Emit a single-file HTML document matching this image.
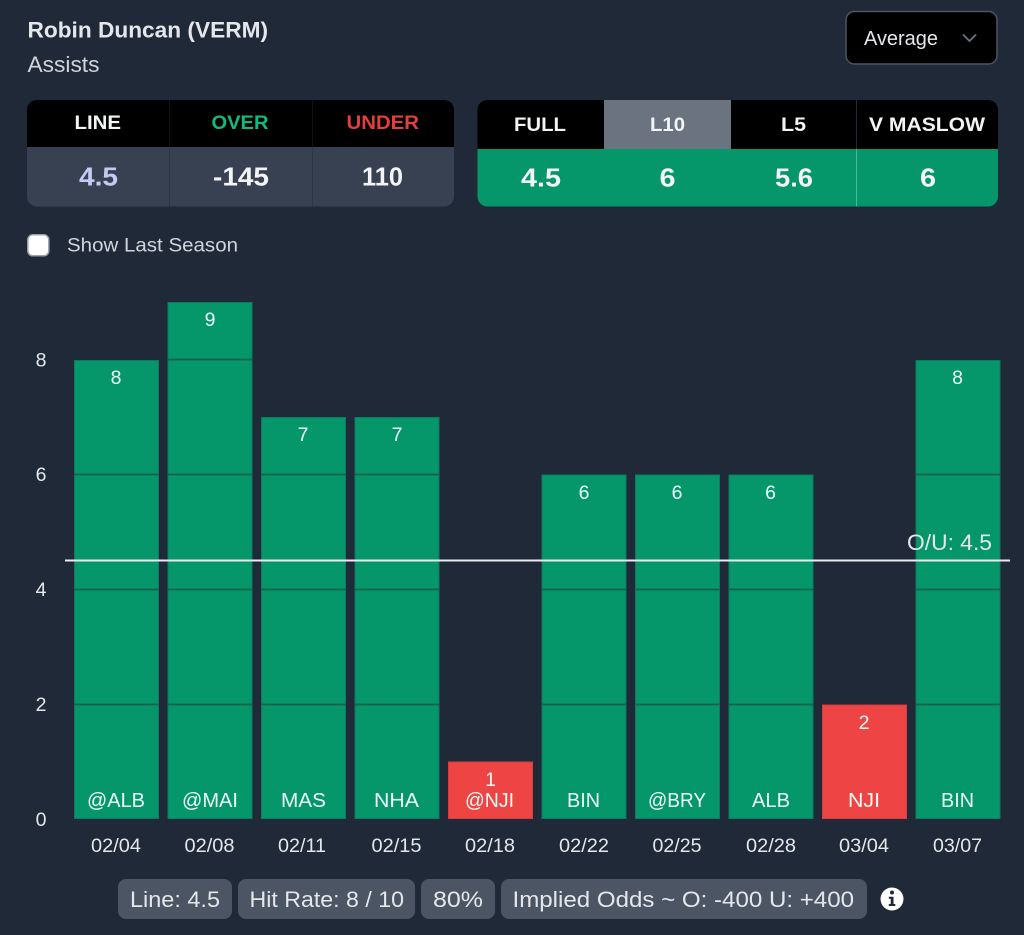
<!DOCTYPE html>
<html><head><meta charset="utf-8"><style>
html,body{margin:0;padding:0;background:#1f2937;width:1024px;height:935px;overflow:hidden}
svg{display:block;font-family:"Liberation Sans",sans-serif}
.b{font-weight:700}
.bar{fill:#059669;stroke:#0a7c62;stroke-width:1}
.red{fill:#ef4444;stroke:#d23f45;stroke-width:1}
.v{font-size:19.5px;fill:#ecfdf5;text-anchor:middle}
.a{font-size:19.5px;fill:#e5e7eb;text-anchor:middle}
.c{font-size:22px;fill:#e5e7eb}
.g{stroke:#14604f;stroke-width:1.8}
.h{font-size:19.5px;font-weight:700;fill:#f3f4f6}
.n{font-size:26px;font-weight:700;fill:#f3f4f6}
</style></head><body>
<svg width="1024" height="935" viewBox="0 0 1024 935" xmlns="http://www.w3.org/2000/svg">
<rect width="1024" height="935" fill="#1f2937"/>
<text x="27.5" y="37.500" class="b" font-size="22.5" fill="#e5e7eb" lengthAdjust="spacingAndGlyphs" textLength="240.5">Robin Duncan (VERM)</text>
<text x="27.5" y="72" font-size="22" fill="#d1d5db" lengthAdjust="spacingAndGlyphs" textLength="72">Assists</text>

<rect x="846" y="11.5" width="151" height="52.5" rx="8.5" fill="#000" stroke="#4b5563" stroke-width="1.5"/>
<text x="864" y="45" font-size="20" fill="#e5e7eb" lengthAdjust="spacingAndGlyphs" textLength="74">Average</text>
<path d="M963 34.5 L969.5 41 L976 34.5" fill="none" stroke="#6b7280" stroke-width="1.8"/>

<!-- left table -->
<clipPath id="l"><rect x="27" y="100" width="427" height="106.5" rx="10"/></clipPath>
<g clip-path="url(#l)">
<rect x="27" y="100" width="427" height="47" fill="#000"/>
<rect x="27" y="147" width="427" height="60" fill="#374151"/>
<path d="M169.5 100V207M312.5 100V207" stroke="#1f2937" stroke-width="1" opacity=".45"/>
</g>
<text x="74.5" y="129" class="h" lengthAdjust="spacingAndGlyphs" textLength="46.5">LINE</text>
<text x="211.5" y="129" class="h" style="fill:#10b981" lengthAdjust="spacingAndGlyphs" textLength="57">OVER</text>
<text x="346.5" y="129" class="h" style="fill:#e53e3e" lengthAdjust="spacingAndGlyphs" textLength="72.5">UNDER</text>
<text x="79" y="185.500" class="n" style="fill:#c3cbf5" lengthAdjust="spacingAndGlyphs" textLength="39">4.5</text>
<text x="213" y="185.500" class="n" lengthAdjust="spacingAndGlyphs" textLength="56">-145</text>
<text x="362" y="185.500" class="n" lengthAdjust="spacingAndGlyphs" textLength="41">110</text>

<!-- right table -->
<clipPath id="r"><rect x="477.500" y="100" width="520.500" height="106.500" rx="10"/></clipPath>
<g clip-path="url(#r)">
<rect x="477" y="100" width="522" height="49" fill="#000"/>
<rect x="604" y="100" width="127" height="49" fill="#6b7280"/>
<rect x="477" y="149" width="522" height="58" fill="#059669"/>
<path d="M856.500 100V149" stroke="#1f2937" stroke-width="1"/>
<path d="M856.500 149V207" stroke="#4fb596" stroke-width="1"/>
</g>
<text x="514" y="131" class="h" lengthAdjust="spacingAndGlyphs" textLength="52">FULL</text>
<text x="650" y="131" class="h" lengthAdjust="spacingAndGlyphs" textLength="35">L10</text>
<text x="781" y="131" class="h" lengthAdjust="spacingAndGlyphs" textLength="25">L5</text>
<text x="869" y="131" class="h" lengthAdjust="spacingAndGlyphs" textLength="116">V MASLOW</text>
<text x="521" y="186.500" class="n" lengthAdjust="spacingAndGlyphs" textLength="40">4.5</text>
<text x="659.500" y="186.500" class="n" lengthAdjust="spacingAndGlyphs" textLength="16">6</text>
<text x="775" y="186.500" class="n" lengthAdjust="spacingAndGlyphs" textLength="38">5.6</text>
<text x="920" y="186.500" class="n" lengthAdjust="spacingAndGlyphs" textLength="16">6</text>

<!-- checkbox -->
<rect x="27.800" y="234.800" width="21" height="21" rx="5" fill="#fff" stroke="#9ca3af" stroke-width="1.500"/>
<text x="67" y="251.500" font-size="19.500" fill="#d1d5db" lengthAdjust="spacingAndGlyphs" textLength="171">Show Last Season</text>

<!-- axis -->
<text x="41" y="366.500" class="a">8</text>
<text x="41" y="481" class="a">6</text>
<text x="41" y="596" class="a">4</text>
<text x="41" y="711" class="a">2</text>
<text x="41" y="826" class="a">0</text>

<!-- bars -->
<rect class="bar" x="74.500" y="360.500" width="84" height="458"/>
<rect class="bar" x="168" y="302.500" width="84" height="516"/>
<rect class="bar" x="261.500" y="417.500" width="84" height="401"/>
<rect class="bar" x="355" y="417.500" width="84" height="401"/>
<rect class="red" x="448.500" y="762" width="84" height="56.500"/>
<rect class="bar" x="542" y="475" width="84" height="343.500"/>
<rect class="bar" x="635.500" y="475" width="84" height="343.500"/>
<rect class="bar" x="729" y="475" width="84" height="343.500"/>
<rect class="red" x="822.500" y="705" width="84" height="113.500"/>
<rect class="bar" x="916" y="360.500" width="84" height="458"/>

<!-- grid lines inside bars -->
<path class="g" d="M168 359.500H252M74.500 474.500H158.500M168 474.500H252M261.500 474.500H345.500M355 474.500H439M916 474.500H1000M74.500 589.500H158.500M168 589.500H252M261.500 589.500H345.500M355 589.500H439M542 589.500H626M635.500 589.500H719.500M729 589.500H813M916 589.500H1000M74.500 704.500H158.500M168 704.500H252M261.500 704.500H345.500M355 704.500H439M542 704.500H626M635.500 704.500H719.500M729 704.500H813M916 704.500H1000"/>

<!-- top values -->
<text x="116" y="384" class="v">8</text>
<text x="210" y="326" class="v">9</text>
<text x="303" y="441" class="v">7</text>
<text x="397" y="441" class="v">7</text>
<text x="490.500" y="786" class="v">1</text>
<text x="584" y="499" class="v">6</text>
<text x="677" y="499" class="v">6</text>
<text x="770.500" y="499" class="v">6</text>
<text x="864" y="729" class="v">2</text>
<text x="957.500" y="384" class="v">8</text>

<!-- opponent -->
<g font-size="20" fill="#ecfdf5">
<text x="87" y="807" lengthAdjust="spacingAndGlyphs" textLength="58">@ALB</text>
<text x="182" y="807" lengthAdjust="spacingAndGlyphs" textLength="56">@MAI</text>
<text x="281" y="807" lengthAdjust="spacingAndGlyphs" textLength="45">MAS</text>
<text x="374" y="807" lengthAdjust="spacingAndGlyphs" textLength="45">NHA</text>
<text x="465" y="807" lengthAdjust="spacingAndGlyphs" textLength="49">@NJI</text>
<text x="567" y="807" lengthAdjust="spacingAndGlyphs" textLength="33">BIN</text>
<text x="648" y="807" lengthAdjust="spacingAndGlyphs" textLength="58">@BRY</text>
<text x="752" y="807" lengthAdjust="spacingAndGlyphs" textLength="38">ALB</text>
<text x="848" y="807" lengthAdjust="spacingAndGlyphs" textLength="32">NJI</text>
<text x="941" y="807" lengthAdjust="spacingAndGlyphs" textLength="33">BIN</text>
</g>

<!-- dates -->
<g font-size="19.500" fill="#e5e7eb">
<text x="91" y="852" lengthAdjust="spacingAndGlyphs" textLength="50">02/04</text>
<text x="184.500" y="852" lengthAdjust="spacingAndGlyphs" textLength="50">02/08</text>
<text x="278" y="852" lengthAdjust="spacingAndGlyphs" textLength="48">02/11</text>
<text x="371.500" y="852" lengthAdjust="spacingAndGlyphs" textLength="50">02/15</text>
<text x="465" y="852" lengthAdjust="spacingAndGlyphs" textLength="50">02/18</text>
<text x="559" y="852" lengthAdjust="spacingAndGlyphs" textLength="50">02/22</text>
<text x="652.500" y="852" lengthAdjust="spacingAndGlyphs" textLength="49">02/25</text>
<text x="746" y="852" lengthAdjust="spacingAndGlyphs" textLength="50">02/28</text>
<text x="839" y="852" lengthAdjust="spacingAndGlyphs" textLength="50">03/04</text>
<text x="933" y="852" lengthAdjust="spacingAndGlyphs" textLength="49">03/07</text>
</g>

<!-- O/U -->
<path d="M65 560.500H1010" stroke="#e8ecef" stroke-width="2"/>
<text x="907" y="550" class="c" lengthAdjust="spacingAndGlyphs" textLength="85">O/U: 4.5</text>

<!-- chips -->
<rect x="118" y="879" width="114" height="40" rx="8" fill="#4b5563"/>
<rect x="238" y="879" width="177" height="40" rx="8" fill="#4b5563"/>
<rect x="421" y="879" width="74" height="40" rx="8" fill="#4b5563"/>
<rect x="501" y="879" width="366" height="40" rx="8" fill="#4b5563"/>
<text x="130" y="907" class="c" lengthAdjust="spacingAndGlyphs" textLength="90">Line: 4.5</text>
<text x="249.500" y="907" class="c" lengthAdjust="spacingAndGlyphs" textLength="154.500">Hit Rate: 8 / 10</text>
<text x="433" y="907" class="c" lengthAdjust="spacingAndGlyphs" textLength="50">80%</text>
<text x="512.500" y="907" class="c" lengthAdjust="spacingAndGlyphs" textLength="341.500">Implied Odds ~ O: -400 U: +400</text>

<!-- info icon -->
<circle cx="892" cy="899" r="11.500" fill="#fff"/>
<circle cx="892" cy="892.500" r="2" fill="#1f2937"/>
<path d="M888.800 896.700H893.500V904H895.300V906H888.800V904H890.700V898.700H888.800Z" fill="#1f2937"/>
</svg>
</body></html>
